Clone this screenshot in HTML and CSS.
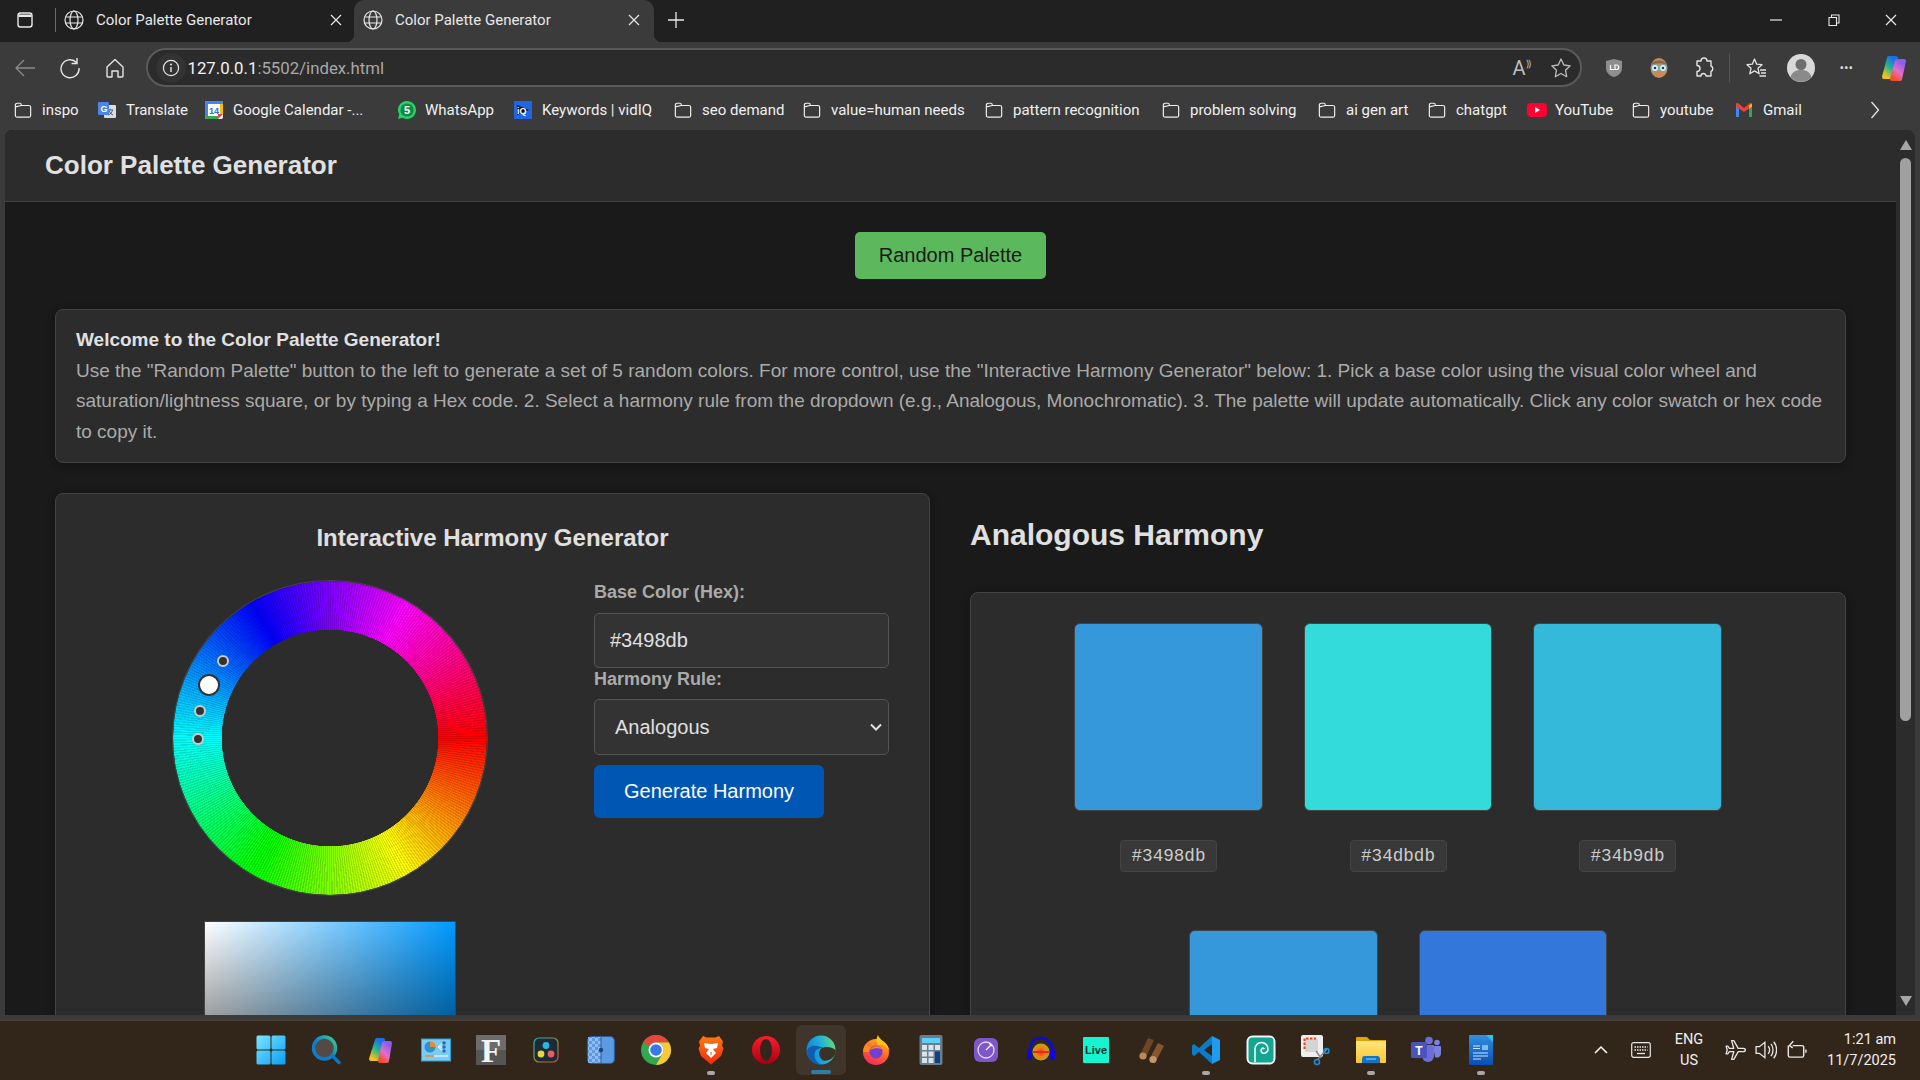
FILE: index.html
```html
<!DOCTYPE html>
<html lang="en">
<head>
<meta charset="utf-8">
<title>Color Palette Generator</title>
<link rel="stylesheet" href="styles.css">
</head>
<body>
<svg class="defs" width="0" height="0" aria-hidden="true">
  <defs>
    <symbol id="globe" viewBox="0 0 20 20"><g fill="none" stroke="currentColor" stroke-width="1.2"><circle cx="10" cy="10" r="9"/><ellipse cx="10" cy="10" rx="4" ry="9"/><path d="M1.6 7h16.8M1.6 13h16.8"/></g></symbol>
    <symbol id="close" viewBox="0 0 12 12"><path d="M1 1l10 10M11 1L1 11" fill="none" stroke="currentColor" stroke-width="1.2"/></symbol>
    <symbol id="folder" viewBox="0 0 20 20"><path d="M1.5 16V4.500A2 2 0 0 1 3.500 2.500H6.500a1.500 1.500 0 0 1 1.500 1.500v1h8.500a2 2 0 0 1 2 2V16a2 2 0 0 1-2 2h-13a2 2 0 0 1-2-2zM1.500 6.500l6.500-1.500" fill="none" stroke="currentColor" stroke-width="1.300" stroke-linejoin="round"/></symbol>
    <linearGradient id="gWin" gradientUnits="userSpaceOnUse" x1="0" y1="0" x2="30" y2="30"><stop offset="0" stop-color="#7be8ff"/><stop offset="1" stop-color="#0a9cf6"/></linearGradient>
    <linearGradient id="gSearch" x1="0" y1="1" x2="1" y2="0"><stop offset=".45" stop-color="#0a7ed2"/><stop offset="1" stop-color="#3fd08a"/></linearGradient>
    <linearGradient id="gCopL" x1="0.7" y1="0" x2="0.2" y2="1"><stop offset="0" stop-color="#1c6fe8"/><stop offset=".5" stop-color="#27b58e"/><stop offset="1" stop-color="#f2c21a"/></linearGradient>
    <linearGradient id="gCopR" x1="0.7" y1="0" x2="0.2" y2="1"><stop offset="0" stop-color="#8a5cf0"/><stop offset=".55" stop-color="#e86cc8"/><stop offset="1" stop-color="#f2502c"/></linearGradient>
    <linearGradient id="gResolve" x1="0" y1="0" x2="1" y2="1"><stop offset="0" stop-color="#1fa9c9"/><stop offset=".5" stop-color="#8a9a3a"/><stop offset="1" stop-color="#d8424a"/></linearGradient>
    <linearGradient id="gBrave" x1="0" y1="0" x2="0" y2="1"><stop offset="0" stop-color="#ff7a12"/><stop offset="1" stop-color="#f02a10"/></linearGradient>
    <linearGradient id="gOpera" x1="0" y1="0" x2="0" y2="1"><stop offset="0" stop-color="#ff1b2d"/><stop offset="1" stop-color="#a70014"/></linearGradient>
    <linearGradient id="gEdge" x1="0" y1="0.6" x2="1" y2="0.3"><stop offset="0" stop-color="#0c7fd8"/><stop offset=".55" stop-color="#22b0dc"/><stop offset="1" stop-color="#5fdc78"/></linearGradient>
    <linearGradient id="gFox" x1="0.7" y1="0" x2="0.2" y2="1"><stop offset="0" stop-color="#ffb21c"/><stop offset=".55" stop-color="#ff5a2c"/><stop offset="1" stop-color="#f0246a"/></linearGradient>
    <radialGradient id="gWave"><stop offset="0" stop-color="#ee2a1a"/><stop offset=".5" stop-color="#f07a18"/><stop offset="1" stop-color="#b8a820"/></radialGradient>
    <linearGradient id="gFolder" x1="0" y1="0" x2="0" y2="1"><stop offset="0" stop-color="#ffe680"/><stop offset="1" stop-color="#fcc52a"/></linearGradient>
    <linearGradient id="gWriter" x1="0" y1="0" x2="0" y2="1"><stop offset="0" stop-color="#2f8fe0"/><stop offset="1" stop-color="#0a4fb4"/></linearGradient>
    <pattern id="pCheck" width="6" height="6" patternUnits="userSpaceOnUse"><rect width="6" height="6" fill="#5f97e0"/><rect width="3" height="3" fill="#93bcf2"/><rect x="3" y="3" width="3" height="3" fill="#93bcf2"/></pattern>
  </defs>
</svg>

<header class="tabstrip">
  <div class="strip-btn">
    <svg class="ic18" viewBox="0 0 18 18"><rect x="2" y="2" width="14" height="14" rx="2.5" fill="none" stroke="#e8e8e8" stroke-width="1.4"/><path d="M2.5 3.5h13v2.5h-13z" fill="#e8e8e8"/></svg>
  </div>
  <span class="strip-sep"></span>
  <div class="tab">
    <svg class="ic20"><use href="#globe"/></svg>
    <span class="tab-title">Color Palette Generator</span>
    <svg class="ic12"><use href="#close"/></svg>
  </div>
  <div class="tab tab-active">
    <svg class="ic20"><use href="#globe"/></svg>
    <span class="tab-title">Color Palette Generator</span>
    <svg class="ic12"><use href="#close"/></svg>
  </div>
  <svg class="new-tab" viewBox="0 0 18 18"><path d="M9 1v16M1 9h16" fill="none" stroke="#e8e8e8" stroke-width="1.3"/></svg>
  <div class="win-controls">
    <span class="win-btn"><svg class="ic12" viewBox="0 0 12 12"><path d="M0 6h12" stroke="#e8e8e8" stroke-width="1.2"/></svg></span>
    <span class="win-btn"><svg class="ic12" viewBox="0 0 12 12"><path d="M1 3.5h7.5v8H1zM3.5 3.5V1H11v8H8.5" fill="none" stroke="#e8e8e8" stroke-width="1.1"/></svg></span>
    <span class="win-btn"><svg class="ic12"><use href="#close"/></svg></span>
  </div>
</header>

<nav class="toolbar">
  <span class="tool-btn dim"><svg class="ic22" viewBox="0 0 22 22"><path d="M21 11H2M10 3l-8 8 8 8" fill="none" stroke="currentColor" stroke-width="1.3"/></svg></span>
  <span class="tool-btn"><svg class="ic22" viewBox="0 0 22 22"><path d="M17.5 5.5A9 9 0 1 0 20 11M18 1v5.5h-5.5" fill="none" stroke="currentColor" stroke-width="1.4"/></svg></span>
  <span class="tool-btn"><svg class="ic22" viewBox="0 0 22 22"><path d="M3 10l8-7.5 8 7.5v9a1 1 0 0 1-1 1h-4v-6H8v6H4a1 1 0 0 1-1-1z" fill="none" stroke="currentColor" stroke-width="1.4" stroke-linejoin="round"/></svg></span>
  <div class="address">
    <span class="addr-info"><svg class="ic18" viewBox="0 0 18 18"><circle cx="9" cy="9" r="7.6" fill="none" stroke="#e8e8e8" stroke-width="1.2"/><path d="M9 8v5" stroke="#e8e8e8" stroke-width="1.4"/><circle cx="9" cy="5.5" r="1" fill="#e8e8e8"/></svg></span>
    <span class="url"><b>127.0.0.1</b>:5502/index.html</span>
    <span class="addr-read">A<sup>&#x2E29;</sup></span>
    <svg class="ic22 addr-star" viewBox="0 0 22 22"><path d="M11 2l2.8 6 6.4.8-4.7 4.4 1.2 6.5L11 16.500l-5.700 3.200 1.200-6.500L1.800 8.800 8.200 8z" fill="none" stroke="#bdbdbd" stroke-width="1.300" stroke-linejoin="round"/></svg>
  </div>
  <span class="tool-btn"><svg class="ic20" viewBox="0 0 20 20"><path d="M10 1l8 2v7c0 5-4 8-8 9-4-1-8-4-8-9V3z" fill="#8e8e8e"/><path d="M6.500 7v4.500h3.500M11 7v4.500h1.500a2 2 0 0 0 0-4.500z" fill="none" stroke="#fff" stroke-width="1.200"/></svg></span>
  <span class="tool-btn"><svg class="ic22" viewBox="0 0 22 22"><ellipse cx="11" cy="11" rx="8.500" ry="10" fill="#c98a5c"/><path d="M3 8c1-6 15-6 16 0-4-2-12-2-16 0z" fill="#8a6a48"/><circle cx="7" cy="11" r="3.600" fill="#dff2f6" stroke="#5ba8b8"/><circle cx="15" cy="11" r="3.600" fill="#dff2f6" stroke="#5ba8b8"/><circle cx="7" cy="11" r="1.300" fill="#334"/><circle cx="15" cy="11" r="1.300" fill="#334"/></svg></span>
  <span class="tool-btn"><svg class="ic22" viewBox="0 0 22 22"><path d="M8 4a3 3 0 0 1 6 0h4v5a3 3 0 0 1 0 5.500V19h-5a2.500 2.500 0 0 0-5 0H4v-4.500a3 3 0 0 0 0-6V4z" fill="none" stroke="currentColor" stroke-width="1.400" stroke-linejoin="round"/></svg></span>
  <span class="tool-sep"></span>
  <span class="tool-btn"><svg class="ic22" viewBox="0 0 22 22"><path d="M9.500 2l2.200 5.200 5.300.5-4 3.600 1.200 5.500-4.700-2.900-4.700 2.900 1.200-5.500-4-3.600 5.300-.5zM15 13h6M16 16h5M14.500 19h6.500" fill="none" stroke="currentColor" stroke-width="1.300" stroke-linejoin="round"/></svg></span>
  <span class="tool-btn"><svg class="ic28" viewBox="0 0 28 28"><circle cx="14" cy="14" r="14" fill="#d8d8d8"/><circle cx="14" cy="10.500" r="5.500" fill="#6e6e6e"/><path d="M3.500 23c2-6 6-7 10.500-7s8.500 1 10.500 7a14 14 0 0 1-21 0z" fill="#8a8a8a"/></svg></span>
  <span class="tool-btn dots">&#8226;&#8226;&#8226;</span>
  <span class="tool-btn copilot"><svg class="ic30" viewBox="0 0 30 30"><path d="M10 5h7l-5 19H5z" fill="url(#gCopL)" stroke="url(#gCopL)" stroke-width="4" stroke-linejoin="round"/><path d="M18 8h7l-4 18h-8z" fill="url(#gCopR)" stroke="url(#gCopR)" stroke-width="4" stroke-linejoin="round"/></svg></span>
</nav>

<nav class="bookmarks">
  <span class="bm"><svg class="ic18"><use href="#folder"/></svg>inspo</span>
  <span class="bm"><svg class="ic18" viewBox="0 0 18 18"><rect x="6" y="4" width="12" height="13" rx="1" fill="#d8dde3"/><path d="M9 9h6M12 8v1M10 14c3-1 4-3 4.500-5M11 10c1 2 3 3.500 4 4" stroke="#556" fill="none"/><rect y="1" width="11" height="13" rx="1" fill="#4a86e8"/><text class="bm-g" x="2.500" y="11">G</text></svg>Translate</span>
  <span class="bm"><svg class="ic18" viewBox="0 0 18 18"><rect width="18" height="18" rx="2" fill="#fff"/><path d="M0 0h18v3H0z" fill="#4285f4"/><path d="M0 3h3v12H0z" fill="#4285f4"/><path d="M0 15h13v3H2a2 2 0 0 1-2-2z" fill="#34a853"/><path d="M15 3h3v10h-3z" fill="#fbbc04"/><path d="M13 13h5l-5 5z" fill="#ea4335"/><text class="bm-cal" x="9" y="12.500">14</text></svg>Google Calendar -...</span>
  <span class="bm bm-wide"><svg class="ic20" viewBox="0 0 20 20"><path d="M10 1a9 9 0 0 0-7.700 13.600L1 19l4.500-1.200A9 9 0 1 0 10 1z" fill="#25d366"/><circle cx="10" cy="10" r="6.600" fill="#118a3f"/><text class="bm-wa" x="10" y="14">5</text></svg>WhatsApp</span>
  <span class="bm"><svg class="ic18" viewBox="0 0 18 18"><rect width="18" height="18" rx="1" fill="#1f66e5"/><path d="M3 4l12 5-12 5z" fill="#111"/><text class="bm-iq" x="3" y="12.500">iQ</text></svg>Keywords | vidIQ</span>
  <span class="bm"><svg class="ic18"><use href="#folder"/></svg>seo demand</span>
  <span class="bm"><svg class="ic18"><use href="#folder"/></svg>value=human needs</span>
  <span class="bm"><svg class="ic18"><use href="#folder"/></svg>pattern recognition</span>
  <span class="bm"><svg class="ic18"><use href="#folder"/></svg>problem solving</span>
  <span class="bm"><svg class="ic18"><use href="#folder"/></svg>ai gen art</span>
  <span class="bm"><svg class="ic18"><use href="#folder"/></svg>chatgpt</span>
  <span class="bm bm-wide"><svg class="ic20" viewBox="0 0 20 20"><rect y="3" width="20" height="14" rx="4" fill="#ff0033"/><path d="M8 7l5 3-5 3z" fill="#fff"/></svg>YouTube</span>
  <span class="bm"><svg class="ic18"><use href="#folder"/></svg>youtube</span>
  <span class="bm"><svg class="ic18" viewBox="0 0 18 18"><path d="M1 4v12h3V8z" fill="#4285f4"/><path d="M14 8v8h3V4z" fill="#34a853"/><path d="M1 2.500v3L9 11l8-5.500v-3L15 2 9 7 3 2z" fill="#ea4335"/><path d="M14 4.500L17 2.500v3l-3 2.500z" fill="#fbbc04"/></svg>Gmail</span>
  <svg class="bm-more" viewBox="0 0 10 18"><path d="M1.500 1l7 8-7 8" fill="none" stroke="#e8e8e8" stroke-width="1.300"/></svg>
</nav>

<div class="page-frame">
  <div class="viewport">
    <div class="app-header"><h1>Color Palette Generator</h1></div>
    <main class="app-main">
      <div class="random-row"><button class="btn-random">Random Palette</button></div>
      <section class="welcome">
        <strong>Welcome to the Color Palette Generator!</strong><br>
        Use the "Random Palette" button to the left to generate a set of 5 random colors. For more control, use the "Interactive Harmony Generator" below: 1. Pick a base color using the visual color wheel and saturation/lightness square, or by typing a Hex code. 2. Select a harmony rule from the dropdown (e.g., Analogous, Monochromatic). 3. The palette will update automatically. Click any color swatch or hex code to copy it.
      </section>
      <div class="columns">
        <section class="generator">
          <h2>Interactive Harmony Generator</h2>
          <div class="gen-body">
            <div class="picker">
              <div class="wheel-wrap">
                <div class="wheel"></div>
                <span class="handle handle-main"></span>
                <span class="handle handle-a"></span>
                <span class="handle handle-b"></span>
                <span class="handle handle-c"></span>
              </div>
              <div class="sl-square"></div>
            </div>
            <form class="controls">
              <label class="field-label" for="hex">Base Color (Hex):</label>
              <input class="field" id="hex" type="text" value="#3498db">
              <label class="field-label" for="rule">Harmony Rule:</label>
              <select class="field field-select" id="rule"><option>Analogous</option></select>
              <button class="btn-generate" type="button">Generate Harmony</button>
            </form>
          </div>
        </section>
        <section class="results">
          <h2>Analogous Harmony</h2>
          <div class="swatch-panel">
            <div class="swatch-item"><div class="swatch sw1"></div><span class="hex">#3498db</span></div>
            <div class="swatch-item"><div class="swatch sw2"></div><span class="hex">#34dbdb</span></div>
            <div class="swatch-item"><div class="swatch sw3"></div><span class="hex">#34b9db</span></div>
            <div class="swatch-item"><div class="swatch sw4"></div></div>
            <div class="swatch-item"><div class="swatch sw5"></div></div>
          </div>
        </section>
      </div>
    </main>
  </div>
  <div class="scrollbar">
    <span class="sb-up"></span>
    <span class="sb-thumb"></span>
    <span class="sb-down"></span>
  </div>
</div>
<div class="frame-bottom"></div>

<footer class="taskbar">
  <div class="task-icons">
    <span class="task"><svg class="ic30" viewBox="0 0 30 30"><g fill="url(#gWin)"><rect x=".5" y=".5" width="14" height="14" rx="1.500"/><rect x="15.500" y=".5" width="14" height="14" rx="1.500"/><rect x=".5" y="15.500" width="14" height="14" rx="1.500"/><rect x="15.500" y="15.500" width="14" height="14" rx="1.500"/></g></svg></span>
    <span class="task"><svg class="ic30" viewBox="0 0 30 30"><circle cx="13.500" cy="13" r="11" fill="#544a44" stroke="url(#gSearch)" stroke-width="3.400"/><path d="M22 21.500l6 6" stroke="#0a78c8" stroke-width="3.400" stroke-linecap="round"/></svg></span>
    <span class="task"><svg class="ic30" viewBox="0 0 30 30"><path d="M11 5h6l-5 19H5z" fill="url(#gCopL)" stroke="url(#gCopL)" stroke-width="4" stroke-linejoin="round"/><path d="M18 8h6l-3 18h-7z" fill="url(#gCopR)" stroke="url(#gCopR)" stroke-width="4" stroke-linejoin="round"/></svg></span>
    <span class="task"><svg class="ic30" viewBox="0 0 30 30"><rect x=".5" y="4" width="29" height="22" fill="#7ccbf2" stroke="#2a9fd8"/><circle cx="9" cy="12" r="5.500" fill="#2e8fd8"/><path d="M9 12V6.500A5.500 5.500 0 0 1 14.500 12z" fill="#f08c1c"/><path d="M17 12l5-4M17 12l5 0M17 12l5 4" stroke="#fff"/><circle cx="23" cy="8" r="1.800" fill="#1f6fb8"/><circle cx="23" cy="12" r="1.800" fill="#1f6fb8"/><circle cx="23" cy="16" r="1.800" fill="#1f6fb8"/><path d="M4 21h9" stroke="#f08c1c" stroke-width="1.500"/><path d="M13 21h14" stroke="#fff"/></svg></span>
    <span class="task"><svg class="ic30" viewBox="0 0 30 30"><rect width="30" height="15" fill="#6c6c6c"/><rect y="15" width="30" height="15" fill="#555"/><text class="icon-f" x="15" y="26.500">F</text></svg></span>
    <span class="task"><svg class="ic30" viewBox="0 0 30 30"><rect x="3" y="3" width="24" height="24" rx="5" fill="#1d2a38" stroke="url(#gResolve)" stroke-width="1.200"/><circle cx="15" cy="10.500" r="3.400" fill="#25b8dc"/><circle cx="10" cy="19" r="3.400" fill="#e6d93c"/><circle cx="20" cy="19" r="3.400" fill="#e85c5c"/></svg></span>
    <span class="task"><svg class="ic30" viewBox="0 0 30 30"><rect x="1.500" y="1.500" width="27" height="27" rx="4.500" fill="#5b9be6" stroke="#2e5c96" stroke-width="1.200"/><rect x="2" y="2" width="13" height="26" fill="url(#pCheck)"/><path d="M15 2v26" stroke="#2e5c96"/><circle cx="15" cy="15" r="2.200" fill="#24456e"/></svg></span>
    <span class="task"><svg class="ic30" viewBox="0 0 30 30"><circle cx="15" cy="15" r="15" fill="#2fa84f"/><path d="M2 7.500A15 15 0 0 1 28 7.500H15A7.500 7.500 0 0 0 8.500 11.250z" fill="#e8453c"/><path d="M28 7.500A15 15 0 0 1 15 30l6.500-11.250A7.500 7.500 0 0 0 15 7.500z" fill="#fcc934"/><circle cx="15" cy="15" r="7.500" fill="#fff"/><circle cx="15" cy="15" r="5.800" fill="#3b78e7"/></svg></span>
    <span class="task task-open"><svg class="ic30" viewBox="0 0 30 30"><path d="M7 1l3.500 1.500h9L23 1l4 5.500-1 4 1.500 3L25 21l-10 8.500L5 21l-2.500-7.500 1.500-3-1-4z" fill="url(#gBrave)"/><path d="M15 9c-3 0-5-1-7-1l1 5 4 1-3 4 5 5 5-5-3-4 4-1 1-5c-2 0-4 1-7 1z" fill="#fff"/><path d="M15 17v3" stroke="#f04a10"/></svg></span>
    <span class="task"><svg class="ic30" viewBox="0 0 30 30"><circle cx="15" cy="15" r="14" fill="url(#gOpera)"/><ellipse cx="15" cy="15" rx="6" ry="11" fill="#33271c"/></svg></span>
    <span class="task task-active"><svg class="ic30" viewBox="0 0 30 30"><circle cx="15" cy="15" r="14.500" fill="url(#gEdge)"/><path d="M30 15.500c-3-3.500-10-4.500-14-2.500-4 2.500-4 9 1 12.500 5 1 10-2 12-6z" fill="#3b3127"/><path d="M1 16c0 8 7 14 15 14-6-2-9-8-7-13 1-3 5-4 8-4-5-3-14-4-16 3z" fill="#0d5eb0"/></svg></span>
    <span class="task"><svg class="ic30" viewBox="0 0 30 30"><circle cx="15" cy="17" r="13" fill="url(#gFox)"/><path d="M17 0c1 5 10 7 12 17-1-4-7-8-12-7-2-3-2-7 0-10z" fill="#ffc21c"/><path d="M2 17c0-4 2-7 4-8l1 3 3-1-2 6z" fill="#ff8a1c"/><circle cx="15" cy="17" r="6.500" fill="#6f3fd6"/><path d="M9 15c3-5 9-5 12-1-4-1-8-1-12 1z" fill="#ff7a2c"/></svg></span>
    <span class="task"><svg class="ic30" viewBox="0 0 30 30"><rect x="3.500" width="23" height="30" rx="2" fill="#6a7d8c"/><rect x="6" y="3" width="18" height="5" fill="#5fd0f5"/><g fill="#d8e3ea"><rect x="6" y="10" width="5" height="5"/><rect x="12.500" y="10" width="5" height="5"/><rect x="19" y="10" width="5" height="5"/><rect x="6" y="16.500" width="5" height="5"/><rect x="12.500" y="16.500" width="5" height="5"/><rect x="6" y="23" width="5" height="5"/><rect x="12.500" y="23" width="5" height="5"/></g><rect x="19" y="16.500" width="5" height="11.500" fill="#123f80"/></svg></span>
    <span class="task"><svg class="ic30" viewBox="0 0 30 30"><rect x="3" y="3" width="24" height="24" rx="6" fill="#7f56c8"/><circle cx="15" cy="15" r="8" fill="none" stroke="#e2d8f8" stroke-width="1.300"/><path d="M15 15l5-5M18 8l3 3" stroke="#fff" stroke-width="1.200"/></svg></span>
    <span class="task"><svg class="ic30" viewBox="0 0 30 30"><path d="M4 19V14a11 11 0 0 1 22 0v5" fill="none" stroke="#0a0ae0" stroke-width="2.500"/><rect x="1" y="14" width="5" height="11" rx="2.500" fill="#0a0ae0"/><rect x="24" y="14" width="5" height="11" rx="2.500" fill="#0a0ae0"/><ellipse cx="15" cy="17" rx="8.500" ry="8.500" fill="url(#gWave)"/><path d="M7 17h16" stroke="#e82a1a" stroke-width="2"/></svg></span>
    <span class="task"><svg class="ic30" viewBox="0 0 30 30"><rect x="2" y="2" width="26" height="26" rx="1" fill="#17f5d0"/><text class="icon-live" x="15" y="19">Live</text></svg></span>
    <span class="task"><svg class="ic30" viewBox="0 0 30 30"><path d="M12 3l6 2-8 17-6-2z" fill="#6f4526"/><circle cx="7" cy="21" r="3.600" fill="#b98a5c"/><path d="M22 8l6 3-8 15-6-3z" fill="#85562f"/><circle cx="17" cy="24.500" r="3.600" fill="#c49866"/></svg></span>
    <span class="task task-open"><svg class="ic30" viewBox="0 0 30 30"><path d="M21 1L8 13 3 9 1 10.500v9L3 21l5-4 13 12v-8l-8-6 8-6z" fill="#0a7cc8"/><path d="M21 1l8 4v20l-8 4z" fill="#1f9cf0"/></svg></span>
    <span class="task"><svg class="ic30" viewBox="0 0 30 30"><rect x="1.500" y="1.500" width="27" height="27" rx="5" fill="#10a692" stroke="#f4f4f4" stroke-width="2"/><path d="M9 27V14a6.500 6.500 0 0 1 13 0c0 4-5 5.500-6.500 3s1-5 3-3" fill="none" stroke="#f4f4f4" stroke-width="1.600"/></svg></span>
    <span class="task"><svg class="ic30" viewBox="0 0 30 30"><rect width="22" height="22" rx="2" fill="#eeeeee"/><rect x="4" y="4" width="13" height="13" fill="#d4d4d4"/><path d="M3.500 14V3.500H15" fill="none" stroke="#e0401c" stroke-width="2" stroke-dasharray="2.500 1.500"/><path d="M15 16l5 7M26 14l-9 10" stroke="#888" stroke-width="1.500"/><circle cx="25.500" cy="16" r="2.500" fill="none" stroke="#1a8fd8" stroke-width="1.600"/><circle cx="16" cy="27" r="2.500" fill="none" stroke="#1a8fd8" stroke-width="1.600"/></svg></span>
    <span class="task task-open"><svg class="ic30" viewBox="0 0 30 30"><path d="M0 3a1 1 0 0 1 1-1h10l3 3h16v4H0z" fill="#e3a008"/><rect y="6" width="30" height="22" rx="1" fill="url(#gFolder)"/><path d="M6 28v-4a3 3 0 0 1 2-3h14a3 3 0 0 1 2 3v4z" fill="#0f74c6"/><path d="M10 24h10" stroke="#9cd2f5"/></svg></span>
    <span class="task"><svg class="ic30" viewBox="0 0 30 30"><circle cx="18" cy="5.500" r="3.800" fill="#6b70d8"/><circle cx="26" cy="7.500" r="2.800" fill="#7b80e0"/><path d="M22 11h7a1 1 0 0 1 1 1v7a4 4 0 0 1-6 3z" fill="#7b80e0"/><path d="M11 10h12v11a6 6 0 0 1-12 0z" fill="#6b70d8"/><rect y="7" width="16" height="16" rx="1.500" fill="#4b53bc"/><text class="icon-t" x="8" y="19.500">T</text></svg></span>
    <span class="task task-open"><svg class="ic30" viewBox="0 0 30 30"><path d="M3 1a1 1 0 0 1 1-1h18l5 5v24a1 1 0 0 1-1 1H4a1 1 0 0 1-1-1z" fill="url(#gWriter)"/><path d="M20 0h7v7z" fill="#2fc4e8"/><path d="M7 11h7M7 13.500h7M7 18h15M7 21h15M7 24h8" stroke="#cfe6fa" stroke-width="1.200"/><rect x="16" y="10" width="6" height="5" fill="#7fbdf0"/></svg></span>
  </div>
  <div class="tray">
    <svg class="tray-chev" viewBox="0 0 14 8"><path d="M1 7l6-6 6 6" fill="none" stroke="#fff" stroke-width="1.500"/></svg>
    <svg class="tray-kb" viewBox="0 0 20 16"><rect x=".7" y=".7" width="18.600" height="14.600" rx="2" fill="none" stroke="#e8e8e8" stroke-width="1.200"/><path d="M3.500 5h13M3.500 8h13" stroke="#e8e8e8" stroke-width="1.300" stroke-dasharray="1.500 1"/><path d="M6 11.500h8" stroke="#e8e8e8" stroke-width="1.300"/></svg>
    <span class="tray-lang">ENG<br>US</span>
    <svg class="tray-ic" viewBox="0 0 20 20"><path d="M18.500 10c0-1-1-1.500-2-1.500h-4.500L8 1.500H6L8 8.500H4L2.500 6.500H1l1 3.500-1 3.500h1.500L4 11.500h4L6 18.500h2l4-7h4.500c1 0 2-.5 2-1.500z" fill="none" stroke="#e8e8e8" stroke-width="1.200" stroke-linejoin="round"/></svg>
    <svg class="tray-ic" viewBox="0 0 20 20"><path d="M1 7h3l5-4v14l-5-4H1z M12 6.500c1.500 2 1.500 5 0 7M14.500 4.500c2.500 3 2.500 8 0 11M17 2.500c3.500 4 3.500 11 0 15" fill="none" stroke="#e8e8e8" stroke-width="1.200"/></svg>
    <svg class="tray-ic" viewBox="0 0 20 20"><path d="M3 6v9a1.500 1.500 0 0 0 1.500 1.500h11A1.500 1.500 0 0 0 17 15V7.500A1.500 1.500 0 0 0 15.500 6H7M19 9.500v3M7.500 2L4 6l3 2" fill="none" stroke="#e8e8e8" stroke-width="1.300"/></svg>
    <span class="tray-clock">1:21 am<br>11/7/2025</span>
  </div>
</footer>
</body>
</html>
```
FILE: styles.css
```css
* { box-sizing: border-box; }
html, body { margin: 0; height: 100%; }
body {
  width: 1920px; height: 1080px; overflow: hidden;
  display: flex; flex-direction: column;
  background: #3b3b3b; color: #e8e8e8;
  font-family: Roboto, "Liberation Sans", sans-serif;
}
.defs { position: absolute; }
.ic12 { width: 12px; height: 12px; flex: none; }
.ic18 { width: 18px; height: 18px; flex: none; }
.ic20 { width: 20px; height: 20px; flex: none; }
.ic22 { width: 22px; height: 22px; flex: none; }
.ic28 { width: 28px; height: 28px; flex: none; }
.ic30 { width: 30px; height: 30px; flex: none; overflow: visible; position: relative; }

/* tab strip */
.tabstrip { height: 42px; flex: none; display: flex; align-items: center; background: #202020; }
.strip-btn { width: 50px; display: flex; justify-content: center; margin-bottom: 2px; }
.strip-sep { width: 1px; height: 24px; background: #6a6a6a; margin: 0 4px 2px 5px; }
.tab {
  position: relative; width: 294px; height: 42px; padding: 0 12px 2px 4px;
  display: flex; align-items: center; gap: 12px; font-size: 15px; color: #e8e8e8;
}
.tab-title { flex: 1; }
.tab-active { width: 300px; padding: 0 14px 2px 9px; background: #3b3b3b; border-radius: 10px 10px 0 0; }
.tab-active::before, .tab-active::after {
  content: ""; position: absolute; bottom: 0; width: 8px; height: 8px;
}
.tab-active::before { left: -8px; background: radial-gradient(circle at 0 0, transparent 8px, #3b3b3b 8.500px); }
.tab-active::after { right: -8px; background: radial-gradient(circle at 100% 0, transparent 8px, #3b3b3b 8.500px); }
.new-tab { width: 18px; height: 18px; margin: 0 0 2px 13px; }
.win-controls { margin: 0 0 2px auto; display: flex; }
.win-btn { width: 57.500px; display: flex; justify-content: center; }

/* toolbar */
.toolbar { height: 48px; flex: none; display: flex; align-items: center; padding: 3px 0 0 2.500px; background: #3b3b3b; }
.tool-btn { width: 45px; display: flex; justify-content: center; align-items: center; color: #e4e4e4; flex: none; }
.tool-btn.dim { color: #8a8a8a; }
.address {
  width: 1436px; height: 39px; margin: 0 9.500px 0 8px; flex: none; padding: 0 4px 0 8px;
  display: flex; align-items: center;
  background: #2b2b2b; border: 2px solid #5a5a5a; border-radius: 20px;
}
.addr-info { width: 30px; height: 30px; border-radius: 50%; background: #333; display: flex; align-items: center; justify-content: center; flex: none; }
.url { margin-left: 2px; font-size: 16.800px; color: #a8a8a8; flex: 1; }
.url b { font-weight: 400; color: #f2f2f2; }
.addr-read { font-size: 20px; color: #bdbdbd; margin-right: 19px; line-height: 1; }
.addr-read sup { font-size: 10px; }
.addr-star { margin-right: 4px; }
.tool-sep { width: 1px; height: 28px; background: #555; margin: 0 3px; flex: none; }
.dots { font-size: 12px; letter-spacing: 0.5px; margin-left: 1px; }
.copilot { margin-left: 2px; }

/* bookmarks */
.bookmarks {
  height: 40px; flex: none; padding-left: 14px;
  display: grid; align-items: center; background: #3b3b3b;
  grid-template-columns: 84px 107px 192px 117px 160px 129px 182px 177px 156px 110px 99px 105px 103px 1fr 50px;
  font-size: 15px; color: #f0f0f0;
}
.bm { display: flex; align-items: center; gap: 10px; white-space: nowrap; }
.bm-wide { gap: 8px; }
.bm-g { font: 700 9px "Liberation Sans", sans-serif; fill: #fff; }
.bm-cal { font: 700 9px "Liberation Sans", sans-serif; fill: #1a73e8; text-anchor: middle; }
.bm-wa { font: 700 11px "Liberation Sans", sans-serif; fill: #fff; text-anchor: middle; }
.bm-iq { font: 700 9px "Liberation Sans", sans-serif; fill: #fff; }
.bm-more { width: 10px; height: 18px; grid-column: 15; }

/* page */
.page-frame { flex: 1; min-height: 0; display: flex; margin: 0 5px 0 5px; background: #2c2c2c; border-radius: 8px 8px 0 0; overflow: hidden; }
.viewport { width: 1891px; flex: none; overflow: hidden; background: #1a1a1a; font-family: "Liberation Sans", Arial, sans-serif; color: #e0e0e0; }
.frame-bottom { height: 5px; flex: none; background: #3b3b3b; }
.app-header { height: 72px; padding: 0 40px; display: flex; align-items: center; background: #2c2c2c; border-bottom: 1px solid #444; }
.app-header h1 { margin: 0; font-size: 26px; font-weight: 700; color: #e0e0e0; }
.app-main { padding: 30px 50px 0; }
.random-row { display: flex; justify-content: center; }
.btn-random {
  width: 191px; height: 47px; border: 0; border-radius: 5px; background: #5cb85c; color: #1a1a1a;
  font: 400 20px "Liberation Sans", Arial, sans-serif;
}
.welcome {
  margin-top: 30px; padding: 15px 20px; height: 154px;
  background: #2c2c2c; border: 1px solid #444; border-radius: 8px;
  box-shadow: 0 2px 8px rgba(0,0,0,.3);
  font-size: 19px; line-height: 30.600px; color: #aaa;
}
.welcome strong { color: #e0e0e0; }
.columns { margin-top: 30px; display: grid; grid-template-columns: 875px 876px; column-gap: 40px; }
.generator {
  padding: 25px 40px 40px; height: 700px;
  background: #2c2c2c; border: 1px solid #444; border-radius: 8px;
  box-shadow: 0 2px 8px rgba(0,0,0,.3);
}
.generator h2 { margin: 0 0 24px; text-align: center; font-size: 24px; line-height: 38px; font-weight: 700; color: #e0e0e0; }
.gen-body { display: flex; gap: 30px; }
.picker { width: 468px; flex: none; display: flex; flex-direction: column; align-items: center; gap: 26px; }
.wheel-wrap { position: relative; width: 314px; height: 314px; border-radius: 50%; box-shadow: 0 0 0 1px #444; }
.wheel {
  width: 314px; height: 314px; border-radius: 50%;
  background:
    repeating-conic-gradient(rgba(0,0,0,.13) 0 .5deg, transparent .5deg 1deg),
    conic-gradient(from 90deg, #f00, #ff0, #0f0, #0ff, #00f, #f0f, #f00);
  -webkit-mask: radial-gradient(circle, transparent 108px, #000 108.500px);
  mask: radial-gradient(circle, transparent 108px, #000 108.500px);
}
.handle { position: absolute; border-radius: 50%; transform: translate(-50%, -50%); background: #333; border: 2px solid #ccc; width: 12px; height: 12px; }
.handle-main { left: 35.500px; top: 104px; width: 22px; height: 22px; background: #fff; border: 2px solid #333; }
.handle-a { left: 49.500px; top: 80px; }
.handle-b { left: 27px; top: 130px; }
.handle-c { left: 24.500px; top: 158px; }
.sl-square {
  width: 252px; height: 251px; flex: none; border: 1px solid #444;
  background: linear-gradient(to top, #000, transparent), linear-gradient(to right, #fff, #09f);
}
.controls { width: 295px; flex: none; display: flex; flex-direction: column; align-items: flex-start; }
.field-label { height: 20px; line-height: 22px; font-size: 18px; font-weight: 700; color: #aaa; }
.field {
  width: 295px; height: 55px; margin: 12px 0 0; padding: 0 15px;
  background: #333; border: 1px solid #555; border-radius: 5px; color: #e0e0e0;
  font: 400 20px "Liberation Sans", Arial, sans-serif;
}
.field-select {
  height: 55.500px; margin-top: 11px; padding: 0 20px;
  appearance: none;
  background: #333 url("data:image/svg+xml,%3Csvg xmlns='http://www.w3.org/2000/svg' width='12' height='8'%3E%3Cpath d='M1 1.500l5 5 5-5' fill='none' stroke='%23e0e0e0' stroke-width='2'/%3E%3C/svg%3E") no-repeat right 6px center;
}
.btn-generate {
  width: 230px; height: 53px; margin-top: 10px; border: 0; border-radius: 6px;
  background: #0056b3; color: #fff; font: 400 20px "Liberation Sans", Arial, sans-serif;
}
.results h2 { margin: 0; font-size: 30px; line-height: 34px; height: 99px; padding-top: 25px; font-weight: 700; color: #e0e0e0; }
.swatch-panel {
  height: 700px; padding: 30px 51px 0 31px;
  display: flex; flex-wrap: wrap; justify-content: center; align-content: flex-start; column-gap: 41px; row-gap: 58.500px;
  background: #2c2c2c; border: 1px solid #444; border-radius: 8px;
  box-shadow: 0 2px 8px rgba(0,0,0,.3);
}
.swatch-item { width: 188.500px; height: 248.500px; display: flex; flex-direction: column; align-items: center; gap: 29px; }
.swatch { width: 188.500px; height: 188px; flex: none; border: 1px solid #444; border-radius: 6px; }
.sw1, .sw4 { background: #3498db; }
.sw2 { background: #34dbdb; }
.sw3 { background: #34b9db; }
.sw5 { background: #3477db; }
.hex {
  width: 97px; height: 32px; display: flex; align-items: center; justify-content: center;
  background: #383838; border: 1px solid #444; border-radius: 4px; color: #ccc;
  font: 400 17.600px "Liberation Mono", "Courier New", monospace;
}

/* scrollbar */
.scrollbar { flex: 1; position: relative; background: #2c2c2c; display: flex; flex-direction: column; align-items: flex-start; padding-left: 4px; }
.sb-up, .sb-down { width: 0; height: 0; border-left: 6px solid transparent; border-right: 6px solid transparent; flex: none; }
.sb-up { margin-top: 10px; border-bottom: 10px solid #a6a6a6; }
.sb-thumb { width: 11px; height: 563px; margin-top: 8px; background: #a0a0a0; border-radius: 5.500px; flex: none; }
.sb-down { margin-top: auto; margin-bottom: 9px; border-top: 10px solid #a6a6a6; }

/* taskbar */
.taskbar { height: 60px; flex: none; display: flex; align-items: center; padding: 0 0 1px 243.500px; background: #32261b; border-top: 1px solid #4a4036; }
.task-icons { display: flex; }
.task { position: relative; width: 55px; height: 50px; display: flex; align-items: center; justify-content: center; }
.task-open::after { content: ""; position: absolute; left: 23.500px; bottom: 0; width: 8px; height: 4px; border-radius: 2px; background: #a8a8a8; }
.task-active::before { content: ""; position: absolute; top: 0; bottom: 0; left: 2.500px; right: 2.500px; background: rgba(255,255,255,.07); border-radius: 6px; }
.task-active::after { content: ""; position: absolute; left: 17.500px; bottom: 1px; width: 20px; height: 4px; border-radius: 2px; background: #2a7ea8; }
.icon-f { font: 700 33px "Liberation Serif", serif; fill: #f4f4f4; text-anchor: middle; }
.icon-live { font: 700 11px "Liberation Sans", sans-serif; fill: #08302a; text-anchor: middle; }
.icon-t { font: 700 12px "Liberation Sans", sans-serif; fill: #fff; text-anchor: middle; }
.tray { margin-left: 85.500px; display: flex; align-items: center; color: #f0f0f0; font-size: 14.500px; }
.tray-chev { width: 14px; height: 8px; margin-right: 23px; }
.tray-kb { width: 20px; height: 16px; margin-right: 20px; }
.tray-lang { width: 36px; text-align: center; line-height: 21px; margin-right: 18px; }
.tray-ic { width: 22px; height: 22px; margin-right: 8px; }
.tray-clock { margin-left: 5px; width: 76px; text-align: right; line-height: 21px; white-space: nowrap; }
```
